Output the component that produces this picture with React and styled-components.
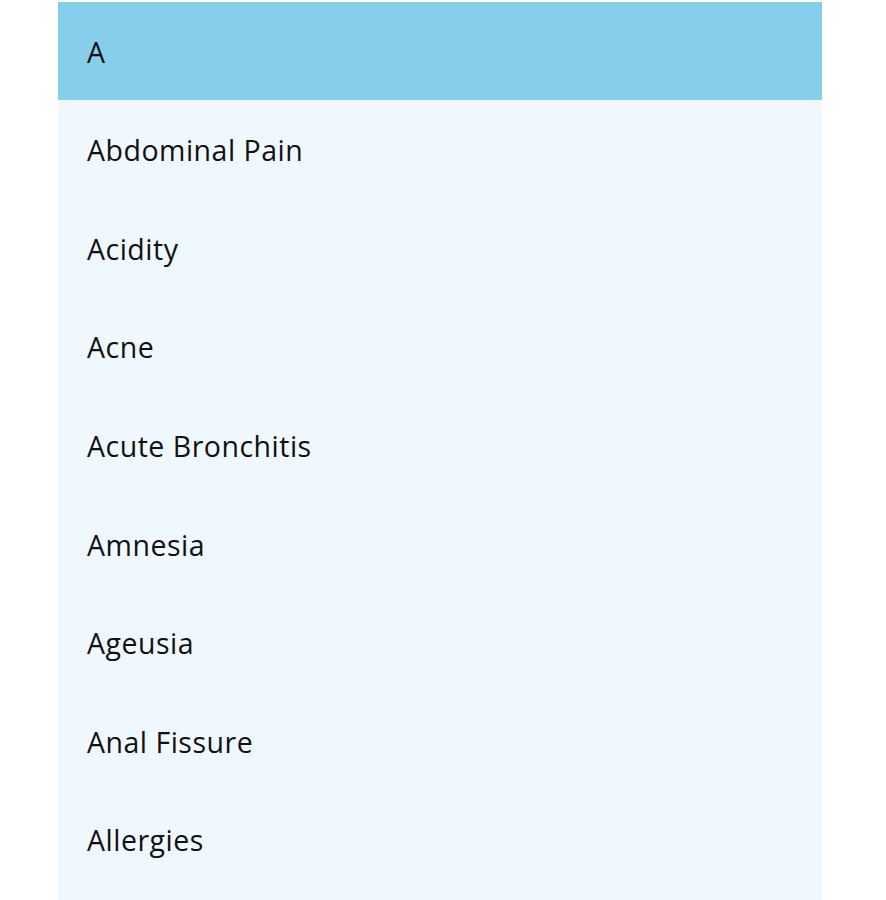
import React from "react";
import styled, { createGlobalStyle } from "styled-components";

const GlobalStyle = createGlobalStyle`
  html, body {
    margin: 0;
    padding: 0;
    background: #ffffff;
  }
  body {
    font-family: "Open Sans", "DejaVu Sans", sans-serif;
  }
`;

const Page = styled.div`
  display: flex;
  padding: 2px 64px 0 58px;
  height: 900px;
  overflow: hidden;
  box-sizing: border-box;
`;

const List = styled.ul`
  list-style: none;
  margin: 0;
  padding: 0;
  width: 764px;
  background: #f0f8ff;
`;

const Row = styled.li`
  display: flex;
  align-items: center;
  box-sizing: border-box;
  height: ${(p) => (p.$header ? "98px" : "98.6px")};
  padding: 2px 0 0 29px;
  font-size: 28.5px;
  letter-spacing: 0.5px;
  color: #111111;
  background: ${(p) => (p.$header ? "#87ceeb" : "transparent")};
`;

const items = [
  "Abdominal Pain",
  "Acidity",
  "Acne",
  "Acute Bronchitis",
  "Amnesia",
  "Ageusia",
  "Anal Fissure",
  "Allergies",
];

export default function App() {
  return (
    <>
      <GlobalStyle />
      <Page>
        <List>
          <Row $header>A</Row>
          {items.map((name) => (
            <Row key={name}>{name}</Row>
          ))}
        </List>
      </Page>
    </>
  );
}
